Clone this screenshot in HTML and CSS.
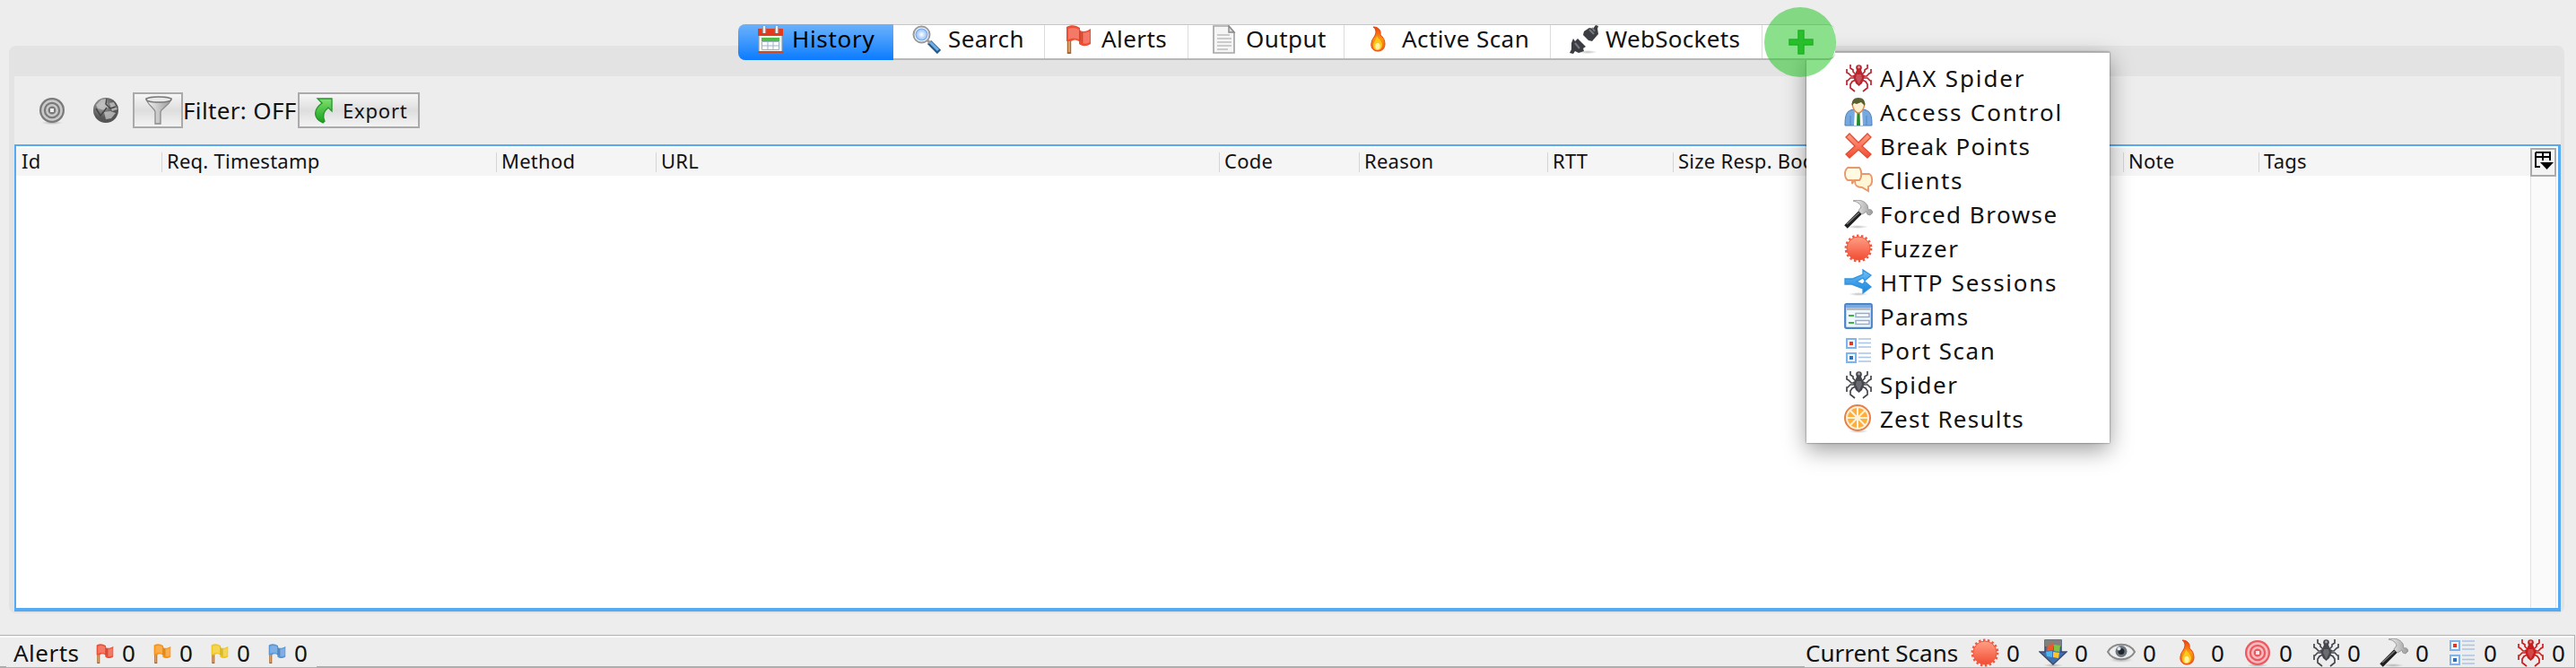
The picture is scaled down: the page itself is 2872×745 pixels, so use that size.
FILE: index.html
```
<!DOCTYPE html>
<html lang="en">
<head>
<meta charset="utf-8">
<title>History</title>
<link rel="stylesheet" href="styles.css">
</head>
<body>
<svg class="defs" aria-hidden="true">
  <defs>
    <linearGradient id="gRed" x1="0" y1="0" x2="0" y2="1"><stop offset="0" stop-color="#ffa085"/><stop offset="1" stop-color="#f24c33"/></linearGradient>
    <linearGradient id="gFire" x1="0" y1="0" x2="0" y2="1"><stop offset="0" stop-color="#e8400c"/><stop offset=".5" stop-color="#fb9a12"/><stop offset="1" stop-color="#f4571a"/></linearGradient>
    <linearGradient id="gGrey" x1="0" y1="0" x2="1" y2="0"><stop offset="0" stop-color="#f4f4f4"/><stop offset="1" stop-color="#999"/></linearGradient>
    <linearGradient id="gBlue" x1="0" y1="0" x2="0" y2="1"><stop offset="0" stop-color="#6fc0f5"/><stop offset="1" stop-color="#1684dc"/></linearGradient>
    <linearGradient id="gGreen" x1="0" y1="0" x2="0" y2="1"><stop offset="0" stop-color="#7fe06f"/><stop offset="1" stop-color="#17a01a"/></linearGradient>
    <radialGradient id="gLens"><stop offset="0" stop-color="#fff"/><stop offset="1" stop-color="#8dbcf7"/></radialGradient>
    <radialGradient id="gGlobe" cx=".35" cy=".3"><stop offset="0" stop-color="#aaa"/><stop offset="1" stop-color="#555"/></radialGradient>
    <radialGradient id="gShade"><stop offset="0" stop-color="#000" stop-opacity=".25"/><stop offset="1" stop-color="#000" stop-opacity="0"/></radialGradient>

    <symbol id="spider" viewBox="0 0 32 32">
      <g fill="none" stroke="currentColor" stroke-width="1.700">
        <path d="M13 12 10 9V7L7 5V1M12 14H8L5 11 3 10V6M12 16H7L4 19H3V24M13 18 9 20 7 23V27L12 31M20 12l3-3V7l3-2V1M21 14h4l3-3 2-1V6M21 16h5l3 3h1v5M20 18l4 2 2 3v4l-5 4"/>
      </g>
      <circle cx="16.500" cy="4.500" r="3.300" fill="currentColor"/><circle cx="16.500" cy="4" r="1.400" fill="#fff" opacity=".55"/>
      <path d="M14 7h5l2 5 2 1-1 4-2 5-3.500 3-3.500-3-2-5-1-4 2-1z" fill="currentColor"/>
      <path d="M14 12h5l1 4-3.500 7-3.500-7z" fill="#fff" opacity=".2"/>
    </symbol>
    <symbol id="burst" viewBox="0 0 32 32">
      <circle cx="16" cy="16" r="13.900" fill="none" stroke="#f0583f" stroke-width="3" stroke-dasharray="2.426 2.426"/>
      <circle cx="16" cy="16" r="13" fill="url(#gRed)" stroke="#f0583f"/>
    </symbol>
    <symbol id="fire" viewBox="0 0 32 32">
      <path d="M8 2c6 0 9 4 8 9 3 2 5 6 5 10 0 5-3 8-8 8s-8-4-7-9c0-4 5-8 5-12 0-3-1-4-3-6z" fill="url(#gFire)" stroke="#e8450f"/>
      <path d="M12 12c0 4-4 7-4 11 0 3 2 5 5 5s5-3 5-6c0-2-1-4-3-6-1-1-2-2-3-4z" fill="#ffc91c"/>
      <ellipse cx="13" cy="23.500" rx="2.700" ry="3.500" fill="#fff3a6"/>
    </symbol>
    <symbol id="hammer" viewBox="0 0 32 32">
      <ellipse cx="15" cy="30" rx="12" ry="2" fill="url(#gShade)"/>
      <path d="M2 30 18 14" stroke="#1e1e1e" stroke-width="5"/>
      <path d="m3 27 14-13" stroke="#777" stroke-width="1.500"/>
      <path d="M10 1c7-2 13 0 16 5l1 5c3-1 5 1 5 3l-3 3-3-1-1-3-5 3-4-4 3-4c-1-4-4-6-9-7z" fill="url(#gGrey)" stroke="#999"/>
    </symbol>
    <symbol id="ports" viewBox="0 0 32 32">
      <g fill="#f4f9ff" stroke="#7fb3ee" stroke-width="2"><path d="M3 3h10v10H3zM3 19h10v10H3z"/></g>
      <path d="M6 6h4v4H6z" fill="#e5361f"/><path d="M6 22h4v4H6z" fill="#2b71bd"/>
      <path d="M16 3h14M16 7.500h14M16 12h14M16 19h14M16 23.500h14M16 28h14" stroke="#a9c3e6" stroke-width="1.500"/>
    </symbol>
    <symbol id="flag" viewBox="0 0 32 32">
      <path d="M4 3v29" stroke="#a9692f" stroke-width="4.500"/><path d="M4 5v25" stroke="#e6b784" stroke-width="1.500"/>
      <path d="M1 2c5-3 11-2 15 1v3c4 2 8 1 12-2v17c-5 3-9 3-13 0v-3c-3-2-6-2-9 0H1z" fill="currentColor"/>
      <path d="M3 4c4-2 9-1 12 1v11c-4-2-8-2-12 0zM19 8c3 1 5 0 8-1v12c-3 2-5 2-8 1z" fill="#fff" opacity=".25"/>
      <path d="M16 5v13M19 8v12" stroke="#000" stroke-opacity=".15" stroke-width="1.500"/>
    </symbol>
    <symbol id="target" viewBox="0 0 32 32">
      <ellipse cx="16" cy="30" rx="12" ry="2" fill="url(#gShade)"/>
      <circle cx="16" cy="16" r="14" fill="currentColor"/>
      <g fill="none" stroke="#fff" stroke-opacity=".6" stroke-width="2.500"><circle cx="16" cy="16" r="10.500"/><circle cx="16" cy="16" r="5.700"/></g>
      <path d="M14 14h4v4h-4z" fill="#fff" opacity=".85"/>
    </symbol>
  </defs>
</svg>

<main class="window">
  <nav class="tabs">
    <div class="tab tab-history"><svg class="icon" viewBox="0 0 32 32"><path d="M3 9h26v22H3z" fill="#f4f4ee" stroke="#9a9a94"/><path d="M2 4h28v8H2z" fill="#e33a1e"/><path d="M2 29h28v2.500H2z" fill="#c9492d"/><path d="M6 14h20v4H6z" fill="#53b947"/><g fill="#fff" stroke="#9fb1c5"><path d="M6.500 18.500h19v9h-19zM6.500 23h19M13 18v9.500M19 18v9.500"/></g><path d="M9 1v8M23 1v8" stroke="#888" stroke-width="4.500"/><path d="M9 1v8M23 1v8" stroke="#eee" stroke-width="2.500"/></svg><span>History</span></div>
    <div class="tab tab-search"><svg class="icon" viewBox="0 0 32 32"><path d="m19 19 11 11" stroke="#24598f" stroke-width="6"/><path d="m20 19 9 9" stroke="#6fb0e6" stroke-width="3"/><path d="m16 16 4 4" stroke="#999" stroke-width="3"/><circle cx="10.500" cy="10.500" r="9" fill="#fff" stroke="#999" stroke-width="2"/><circle cx="10.500" cy="10.500" r="6.500" fill="url(#gLens)" stroke="#79a8ef" stroke-width="1.200"/></svg><span>Search</span></div>
    <div class="tab tab-alerts"><svg class="icon red-flag"><use href="#flag"/></svg><span>Alerts</span></div>
    <div class="tab tab-output"><svg class="icon" viewBox="0 0 32 32"><path d="M5 1h17l6 7v23H5z" fill="#f5f5f5" stroke="#a6a6a6" stroke-width="1.700"/><path d="M22 1v7h6z" fill="#ddd" stroke="#888" stroke-width="1.400"/><path d="M9 11h14M9 15h16M9 19h16M9 23h16M9 27h12" stroke="#bdbdbd" stroke-width="1.700"/></svg><span>Output</span></div>
    <div class="tab tab-active"><svg class="icon"><use href="#fire"/></svg><span>Active Scan</span></div>
    <div class="tab tab-sockets"><svg class="icon" viewBox="0 0 32 32"><ellipse cx="20" cy="30" rx="11" ry="2" fill="url(#gShade)"/><path d="m29 0 3 1-1 3 1 6-7 8-4-1-6-6 1-4 6-4 4 1zM4 15l2 3 3-3 9 9-3 2 1 3-6 2-4-2-2 3-4-1 2-4 0-7z" fill="#3c3d42"/><path d="m22 5 5 5M6 20l5 6M25 3l3 4" stroke="#777a80" stroke-width="2"/></svg><span>WebSockets</span></div>
    <div class="tab tab-add"><svg class="icon" viewBox="0 0 32 32"><path d="M13 2h6v10h10v6H19v10h-6V18H3v-6h10z" fill="#22b62a" stroke="#159a1e" stroke-width="1.500"/></svg></div>
  </nav>

  <section class="panel">
    <div class="toolbar">
      <svg class="icon tool-target"><use href="#target"/></svg>
      <svg class="icon tool-globe" viewBox="0 0 32 32"><circle cx="16" cy="16" r="14" fill="url(#gGlobe)"/><path d="M5 10 11 4l7-1-1 5 3 4-5 4-8-2zM20 8l5-1 4 8-6 2zM14 18l7-1 6 2-5 6-6 1z" fill="#c9c9c9" opacity=".75"/><path d="m17 3-1 6 5 5 6-2M5 14l5 8 4-5 3-4" fill="none" stroke="#444" stroke-width="1.500"/></svg>
      <div class="button filter-button"><svg class="icon" viewBox="0 0 32 32"><path d="M2 3c1 7 10 11 10 15v13h6V18c0-4 11-8 12-15z" fill="url(#gGrey)" stroke="#8b8b8b" stroke-width="1.300"/><ellipse cx="16" cy="4" rx="14" ry="3" fill="#e9e9e9" stroke="#777" stroke-width="1.400"/></svg></div>
      <span class="filter-label">Filter: OFF</span>
      <div class="button export-button"><svg class="icon" viewBox="0 0 32 32"><path d="M10 3h16v14l-4-4c-5 4-7 9-4 15l-2 2C5 25 5 15 15 8z" fill="url(#gGreen)" stroke="#239528" stroke-width="1.300"/></svg><span>Export</span></div>
    </div>
    <div class="table">
      <div class="thead">
        <div class="th c-id"><span>Id</span></div>
        <div class="th c-time"><span>Req. Timestamp</span></div>
        <div class="th c-method"><span>Method</span></div>
        <div class="th c-url"><span>URL</span></div>
        <div class="th c-code"><span>Code</span></div>
        <div class="th c-reason"><span>Reason</span></div>
        <div class="th c-rtt"><span>RTT</span></div>
        <div class="th c-size"><span>Size Resp. Body</span></div>
        <div class="th c-note"><span>Note</span></div>
        <div class="th c-tags"><span>Tags</span></div>
      </div>
      <div class="side">
        <div class="column-button"><svg viewBox="0 0 24 24"><path d="M3 2h16v9M3 7h16M11 2v9M3 2v16h5" fill="none" stroke="#000" stroke-width="2"/><path d="M8 13h15l-7.500 8z" fill="#000"/></svg></div>
        <div class="track"></div>
      </div>
    </div>
  </section>

  <footer class="status">
    <div class="status-left">
      <span class="label-alerts">Alerts</span>
      <div class="count"><svg class="flag red-flag"><use href="#flag"/></svg><span>0</span></div>
      <div class="count"><svg class="flag orange-flag"><use href="#flag"/></svg><span>0</span></div>
      <div class="count"><svg class="flag yellow-flag"><use href="#flag"/></svg><span>0</span></div>
      <div class="count"><svg class="flag blue-flag"><use href="#flag"/></svg><span>0</span></div>
    </div>
    <div class="status-right">
      <span class="label-scans">Current Scans</span>
      <div class="scan"><svg class="icon"><use href="#burst"/></svg><span>0</span></div>
      <div class="scan"><svg class="icon" viewBox="0 0 32 32"><ellipse cx="16" cy="30" rx="11" ry="2" fill="url(#gShade)"/><path d="M7 2h18v13h6L16 29 1 15h6z" fill="#426daf" stroke="#3c4c68" stroke-width="1.500"/><path d="M7 2h18v7H7z" fill="#808080"/><path d="m10 7 6-1v7l-7 1z" fill="#e95a2c"/><path d="m17 7 7 1-1 7-6-1z" fill="#82c441"/><path d="m8 15 7-1v7l-6-1z" fill="#49b8ef"/><path d="m16 15 7 1-1 6-6-1z" fill="#fcc52b"/></svg><span>0</span></div>
      <div class="scan"><svg class="icon" viewBox="0 0 32 32"><ellipse cx="16" cy="24" rx="13" ry="3" fill="url(#gShade)"/><path d="M1 15C7 4 25 4 31 15 25 26 7 26 1 15z" fill="#eee" stroke="#8a8a8a" stroke-width="2"/><circle cx="16" cy="14.500" r="6.500" fill="#6d7580"/><circle cx="16" cy="14.500" r="3.500" fill="#22262c"/><circle cx="13.500" cy="11.500" r="2" fill="#e5e9ee"/></svg><span>0</span></div>
      <div class="scan"><svg class="icon"><use href="#fire"/></svg><span>0</span></div>
      <div class="scan"><svg class="icon pink"><use href="#target"/></svg><span>0</span></div>
      <div class="scan"><svg class="icon dark"><use href="#spider"/></svg><span>0</span></div>
      <div class="scan"><svg class="icon"><use href="#hammer"/></svg><span>0</span></div>
      <div class="scan"><svg class="icon"><use href="#ports"/></svg><span>0</span></div>
      <div class="scan"><svg class="icon crimson"><use href="#spider"/></svg><span>0</span></div>
    </div>
  </footer>

  <div class="menu">
    <div class="item m-ajax"><svg class="icon ruby"><use href="#spider"/></svg><span>AJAX Spider</span></div>
    <div class="item m-access"><svg class="icon" viewBox="0 0 32 32"><path d="M1 31c0-11 1-17 10-18h10c9 1 10 7 10 18z" fill="#76a9df" stroke="#4a7fbc"/><path d="M12 13h8l1 18H11z" fill="#fff"/><path d="M14.500 16h3l.5 15h-4z" fill="#218c25"/><path d="M7 20v11M25 20v11" stroke="#4f86c4"/><path d="M9 7c1 6 4 10 7 10s6-4 7-10l-3-4h-8z" fill="#fff0d2" stroke="#e48945" stroke-width="1.500"/><path d="M9 9C8 3 11 0 16 0s8 3 7 9l-4-4-5 2-3-1z" fill="#58602f"/></svg><span>Access Control</span></div>
    <div class="item m-break"><svg class="icon" viewBox="0 0 32 32"><path d="m6 2 10 10L26 2l4 4-10 10 10 9-4 4-10-9L6 29l-4-4 10-9L2 6z" fill="url(#gRed)" stroke="#e44c31" stroke-width="1.300"/></svg><span>Break Points</span></div>
    <div class="item m-clients"><svg class="icon" viewBox="0 0 32 32"><path d="M17 9h11c4 2 4 11 1 13l-2 1v5l-7-4c-7 0-8-3-8-7z" fill="#fff6d5" stroke="#e8996c" stroke-width="1.900"/><path d="M4 2h13c3 3 3 11 0 14h-6l-2 4v-4H4C0 13 0 5 4 2z" fill="#fffbe2" stroke="#e8996c" stroke-width="1.900"/></svg><span>Clients</span></div>
    <div class="item m-forced"><svg class="icon"><use href="#hammer"/></svg><span>Forced Browse</span></div>
    <div class="item m-fuzzer"><svg class="icon"><use href="#burst"/></svg><span>Fuzzer</span></div>
    <div class="item m-http"><svg class="icon" viewBox="0 0 32 32"><ellipse cx="16" cy="29" rx="11" ry="2" fill="url(#gShade)"/><path d="M1 12h8l12-5V2l9 6-7 6-2-3-7 4 7 3 2-3 7 6-9 7v-5L8 18H1z" fill="url(#gBlue)" stroke="#3491df" stroke-width="1.300"/></svg><span>HTTP Sessions</span></div>
    <div class="item m-params"><svg class="icon" viewBox="0 0 32 32"><rect x="1.200" y="2.200" width="29.600" height="26.600" rx="1.500" fill="#f2f8ff" stroke="#4c85c8" stroke-width="2.200"/><path d="M2 3h28v3H2z" fill="#7baae0"/><path d="M3 6h26v3H3z" fill="#bbb"/><path d="M5 15h6M5 23h6" stroke="#3db33b" stroke-width="2"/><path d="M13 12.500h15v4H13zM13 20.500h15v4H13z" fill="#fff" stroke="#93add0" stroke-width="1.500"/></svg><span>Params</span></div>
    <div class="item m-port"><svg class="icon"><use href="#ports"/></svg><span>Port Scan</span></div>
    <div class="item m-spider"><svg class="icon dark"><use href="#spider"/></svg><span>Spider</span></div>
    <div class="item m-zest"><svg class="icon" viewBox="0 0 32 32"><ellipse cx="16" cy="30" rx="11" ry="2" fill="url(#gShade)"/><circle cx="15" cy="15" r="14" fill="#fff1d6" stroke="#e58148" stroke-width="2"/><circle cx="15" cy="15" r="11" fill="#ffae3c"/><path d="M15 3v24M3 15h24M6.500 6.500l17 17M23.500 6.500l-17 17" stroke="#fff3dc" stroke-width="2"/><circle cx="15" cy="15" r="2" fill="#fff3dc"/></svg><span>Zest Results</span></div>
  </div>
  <div class="click-mark"></div>
</main>
</body>
</html>
```
FILE: styles.css
```
* { box-sizing: border-box; }
body { margin: 0; background: #ededed; color: #111; font: 26px/38px "Noto Sans", "Open Sans", sans-serif; }
.defs { position: absolute; width: 0; height: 0; }
.window { position: relative; width: 2872px; height: 745px; overflow: hidden; display: flex; flex-direction: column; padding-top: 27px; background: #ededed; }
span { white-space: nowrap; display: block; }
.icon { width: 32px; height: 32px; flex: none; display: block; }
.dark { color: #45464d; } .ruby { color: #b9252f; } .crimson { color: #c91c1c; } .pink { color: #ec5961; }
.red-flag { color: #f04d33; } .orange-flag { color: #fb920f; } .yellow-flag { color: #f0c71b; } .blue-flag { color: #5595da; }

/* Tab strip straddles the top edge of the panel */
.tabs { display: flex; height: 40px; margin: 0 0 -16px 823px; width: 1223px; position: relative; z-index: 1; background: #fff; border-radius: 8px; border-top: 1px solid #c6c6c6; border-bottom: 2px solid #b8b8b8; flex: none; }
.tab { display: flex; align-items: flex-start; border-left: 1px solid #dcdcdc; height: 37px; letter-spacing: .45px; }
.tab span { line-height: 36px; margin-top: -3px; }
.tab-history { width: 173px; height: 40px; margin-top: -1px; padding: 1px 0 0 20px; border-left: 0; border-radius: 8px 0 0 8px; background: linear-gradient(#6bb1fb, #3d98fd 50%, #0a7bff); gap: 8px; color: #000; letter-spacing: .7px; }
.tab-search { width: 168px; padding-left: 21px; gap: 8px; border-left: 0; }
.tab-alerts { width: 160px; padding-left: 23px; gap: 8px; }
.tab-output { width: 174px; padding-left: 23px; gap: 9px; }
.tab-active { width: 230px; padding-left: 24px; gap: 8px; }
.tab-sockets { width: 236px; padding-left: 21px; gap: 8px; letter-spacing: .3px; }
.tab-add { flex: 1; padding: 4px 0 0 27px; }

.panel { margin: 0 13px 0 10px; height: 633px; border: solid #e3e3e3; border-width: 34px 4px 2px 6px; border-radius: 8px; background: #ededed; flex: none; }
.toolbar { height: 76px; display: flex; align-items: center; padding-left: 26px; }
.tool-target { color: #7a7a7a; }
.tool-globe { margin-left: 28px; }
.button { height: 40px; border: 2px solid #aaa; background: linear-gradient(#f6f6f6, #dedede 50%, #f3f3f3); display: flex; align-items: center; }
.filter-button { width: 56px; margin-left: 14px; padding-left: 11px; }
.filter-label { width: 128px; letter-spacing: .35px; }
.export-button { width: 136px; padding-left: 10px; gap: 6px; font-size: 22px; line-height: 36px; letter-spacing: .8px; }

.table { height: 521px; border: solid #55aaf2; border-width: 2px 3px 4px 2px; background: #fff; display: flex; padding-top: 2px; }
.thead { display: flex; flex: 1; height: 31px; background: #f5f5f5; font-size: 22px; line-height: 29px; letter-spacing: .25px; }
.th { padding-left: 6px; overflow: hidden; }
.th + .th { background: linear-gradient(#d5d5d5, #d5d5d5) 0 5px / 1px 22px no-repeat; }
.c-id { width: 162px; } .c-time { width: 373px; } .c-method { width: 178px; } .c-url { width: 628px; }
.c-code { width: 156px; } .c-reason { width: 210px; } .c-rtt { width: 140px; } .c-size { width: 502px; }
.c-note { width: 151px; } .c-tags { flex: 1; }
.side { width: 31px; display: flex; flex-direction: column; }
.column-button { width: 29px; height: 32px; border: 2px solid #aaa; background: #f3f3f3; padding: 1px; }
.column-button svg { width: 24px; height: 24px; display: block; }
.track { flex: 1; width: 29px; border: solid #e2e2e2; border-width: 0 1px; background: #fafafa; }

.status { margin: auto 1px 0 0; height: 37px; border: solid #b0b0b0; border-width: 1px 1px 1px 0; box-shadow: inset 0 2px #fff; display: flex; justify-content: space-between; line-height: 39px; flex: none; background: linear-gradient(#aaa, #aaa) 353px 100% / 1659px 1px no-repeat, linear-gradient(#aaa, #aaa) 0 100% / 7px 1px no-repeat; }
.status-left { display: flex; padding-left: 15px; }
.label-alerts { width: 92px; letter-spacing: .5px; }
.count { width: 64px; display: flex; gap: 7px; }
.flag { width: 22px; height: 22px; margin-top: 9px; }
.status-right { display: flex; }
.label-scans { width: 184px; }
.scan { width: 76px; display: flex; gap: 8px; }
.scan .icon { margin-top: 3px; }
.scan:last-child { width: 65px; }

.menu { position: absolute; left: 2014px; top: 58px; width: 338px; height: 436px; padding-top: 9px; background: #fff; border-top: 1px solid #b5b5b5; box-shadow: 0 0 2px rgba(0,0,0,.55), 0 8px 24px rgba(0,0,0,.38); }
.item { height: 38px; display: flex; align-items: center; padding-left: 42px; gap: 8px; letter-spacing: 1.5px; }
.m-ajax, .m-access { letter-spacing: 1.850px; }
.m-break, .m-params, .m-zest { letter-spacing: 1.250px; }
.m-http { letter-spacing: 1.700px; }
.click-mark { position: absolute; z-index: 2; left: 1967px; top: 8px; width: 80px; height: 78px; border-radius: 50%; background: rgba(43,198,43,.55); }
```
